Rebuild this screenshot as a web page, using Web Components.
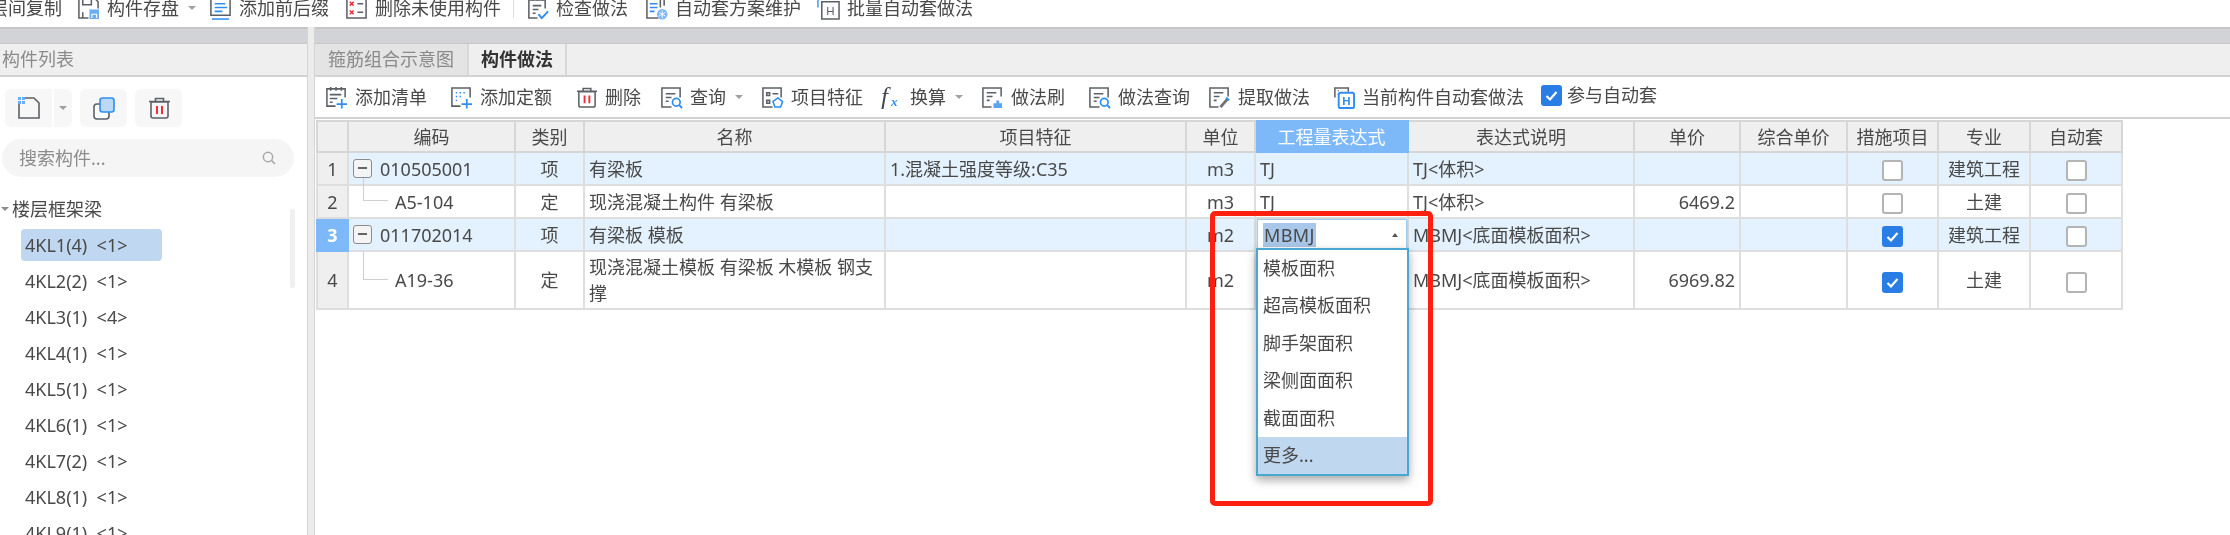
<!DOCTYPE html>
<html lang="zh">
<head>
<meta charset="utf-8">
<title>构件做法</title>
<style>
  html, body { margin: 0; padding: 0; background: #fff; overflow: hidden; }
</style>
</head>
<body>
<gq-app></gq-app>
<script>
const G = '#5c6066', B = '#2f8ef4', R = '#e8303a';
const line = (d, c = G, w = 1.6) => `<path d="${d}" fill="none" stroke="${c}" stroke-width="${w}"/>`;
const svg = (body, size = 24) => `<svg width="${size}" height="${size}" viewBox="0 0 24 24" style="display:block">${body}</svg>`;
const ICONS = {
  save: line('M12 22H2V2h17l3 3v7') + line('M6 2v6h9V2M6 22v-6') + `<rect x="13" y="13" width="10" height="10" fill="#6aaef5"/>` + line('M15.5 22v-4h5v4', '#fff', 1.2),
  prefix: line('M2 2h20v17H2z') + line('M6 7h11M6 11h13M6 15h8', B) + line('M3 23h18', B),
  unused: line('M2 2h20v20H2z') + line('M5 5l4 4M9 5l-4 4M5 14l4 4M9 14l-4 4', R, 1.5) + line('M13 7h6M13 16h6'),
  check: line('M12 22H3V3h17v9') + line('M7 1v3M12 1v3M17 1v3') + line('M7 9h9M7 13h6M7 17h3') + line('M13 18l3.500 4 6.500-7', B, 2),
  scheme: line('M14 22H2V2h14v9') + line('M20 0v9', G) + line('M5 7h8M5 11h8M5 15h5', B) + `<circle cx="18" cy="18" r="5.500" fill="#7db7f5"/>` + line('M18 14v8M14.500 16l7 4M21.500 16l-7 4', '#fff', .9),
  batch: line('M5 5h18v18H5z') + line('M1 0v11M3.500 0v3', B, 1.4) + `<text x="14" y="19" font-size="12" font-family="Liberation Sans" text-anchor="middle" fill="${G}">H</text>`,
  addlist: line('M11 21H2V3h19v9') + line('M6 1v4M11.500 1v4M17 1v4') + line('M5 9h12M5 13h8M5 17h3') + line('M12 19h11M17.500 13.500v10', B, 1.8),
  addquota: line('M11 21H2V2h19v10') + line('M6 7h1.500M10 7h1.500M14 7h1.500M6 11h1.500M10 11h1.500M6 15h1.500', B, 1.5) + line('M12 19h11M17.500 13.500v10', B, 1.8),
  trash: line('M4 6h17v14a2 2 0 0 1-2 2H6a2 2 0 0 1-2-2zM2 5.500h21M8.500 5V2.500h8V5') + line('M10 10v8M15 10v8', R, 2),
  query: line('M12 22H2V2h19v10') + line('M6 8h10M6 12h6M6 16h3') + `<circle cx="17" cy="17" r="4" fill="#fff" stroke="${B}" stroke-width="1.800"/>` + line('M20 20l3 3', B, 2),
  feature: line('M12 22H2V2h19v10') + line('M6 7h3v3H6zM6 15h3v3H6zM12 8h6') + `<path d="M17.500 12.500l5 3.700-2 5.800h-6l-2-5.800z" fill="#fff" stroke="${B}" stroke-width="1.600"/>`,
  brush: line('M11 22H2V2h19v9') + line('M6 7h10M6 11h6M6 15h3') + `<path d="M13 23v-5h3v-3h3v3h3v5z" fill="#5ba4f3"/>`,
  extract: line('M11 22H2V2h19v9') + line('M6 7h10M6 11h6M6 15h3') + line('M13 22l7-8', '#6b7079', 3) + line('M19 12l3 3', B, 2),
  current: line('M3 12V2h14v4') + line('M1 0v0M6 5h1M6 8.500h1', G) + `<rect x="7" y="7" width="16" height="16" rx="2" fill="#fff" stroke="${B}" stroke-width="2"/><text x="15" y="20" font-size="12" font-weight="700" font-family="Liberation Sans" text-anchor="middle" fill="${B}">H</text>`,
  newdoc: line('M2 7v15h20V7l-5-5H6') + `<path d="M1 1h7v7H1z" fill="#6aaef5"/>` + line('M4.500 1v7M1 4.500h7', '#fff', .9),
  copy: `<rect x="2" y="8" width="15" height="15" rx="3" fill="#fff" stroke="${G}" stroke-width="1.600"/><rect x="8" y="2" width="14" height="14" rx="2.500" fill="#bcd8f7" stroke="${B}" stroke-width="1.600"/>`,
  search: `<circle cx="10.500" cy="10.500" r="7" fill="none" stroke="#a8a8a8" stroke-width="2.200"/>` + line('M16 16l5 5', '#a8a8a8', 2.400),
};
const FX = `<svg width="23" height="24" viewBox="0 0 23 24" style="display:block"><text x="1" y="20" font-size="25" font-style="italic" font-family="Liberation Serif" fill="#44484e">f</text><text x="11" y="21" font-size="13" font-weight="700" font-style="italic" font-family="Liberation Serif" fill="${B}">x</text></svg>`;

class GqCheck extends HTMLElement {
  connectedCallback () {
    const on = this.hasAttribute('checked');
    this.attachShadow({ mode: 'open' }).innerHTML = `<style>
        :host { display: inline-block; width: 21px; height: 21px; vertical-align: middle; }
        .box { box-sizing: border-box; width: 21px; height: 21px; border-radius: 3px; background: #fff; border: 2px solid #b4b4b4; }
        .on { background: #2b7de6; border-color: #2b7de6; }
        svg { display: block; margin: 1px; }
      </style>
      <div class="box ${on ? 'on' : ''}">${on ? `<svg width="15" height="15" viewBox="0 0 15 15"><path d="M2.500 8l3.500 3.500 6.500-7.500" fill="none" stroke="#fff" stroke-width="2.200"/></svg>` : ''}</div>`;
  }
}
customElements.define('gq-check', GqCheck);

class GqTool extends HTMLElement {
  connectedCallback () {
    const ml = this.getAttribute('ml') || 0;
    const name = this.getAttribute('icon');
    const ico = name === 'fx' ? FX : (name ? svg(ICONS[name], 23) : '');
    this.attachShadow({ mode: 'open' }).innerHTML = `<style>
        :host { display: flex; align-items: center; gap: 7px; margin-left: ${ml}px; flex: none; white-space: nowrap; }
        .caret { width: 0; height: 0; margin-left: 2px; border-style: solid; border-width: 4px 4px 0; border-color: #a0a0a0 transparent transparent; }
      </style>
      ${ico}<slot></slot>${this.hasAttribute('arrow') ? '<span class="caret"></span>' : ''}`;
  }
}
customElements.define('gq-tool', GqTool);

class GqTopBar extends HTMLElement {
  connectedCallback () {
    this.attachShadow({ mode: 'open' }).innerHTML = `<style>
        :host { display: flex; align-items: center; height: 27px; box-sizing: border-box; padding-bottom: 11px; overflow: hidden; background: #fff; }
        .sep { flex: none; width: 1px; height: 20px; margin-left: 12px; background: #dcdcdc; }
      </style>
      <gq-tool ml="-10">层间复制</gq-tool>
      <gq-tool ml="15" icon="save" arrow>构件存盘</gq-tool>
      <gq-tool ml="13" icon="prefix">添加前后缀</gq-tool>
      <gq-tool ml="16" icon="unused">删除未使用构件</gq-tool>
      <span class="sep"></span>
      <gq-tool ml="12" icon="check">检查做法</gq-tool>
      <gq-tool ml="17" icon="scheme">自动套方案维护</gq-tool>
      <gq-tool ml="16" icon="batch">批量自动套做法</gq-tool>`;
  }
}
customElements.define('gq-topbar', GqTopBar);

class GqSidePanel extends HTMLElement {
  connectedCallback () {
    const items = [['4KL1(4)', '1'], ['4KL2(2)', '1'], ['4KL3(1)', '4'], ['4KL4(1)', '1'], ['4KL5(1)', '1'], ['4KL6(1)', '1'], ['4KL7(2)', '1'], ['4KL8(1)', '1'], ['4KL9(1)', '1']];
    this.attachShadow({ mode: 'open' }).innerHTML = `<style>
        :host { display: block; width: 307px; flex: none; overflow: hidden; position: relative; }
        .band { height: 17px; box-sizing: border-box; background: #d2d3d7; border-top: 2px solid #c6c6c6; border-bottom: 1px solid #c8c8c8; }
        .title { height: 31px; line-height: 30px; background: #efefef; color: #8a8a8a; padding-left: 2px; }
        .rule { height: 2px; background: #d2d2d2; }
        .actions { display: flex; margin: 12px 0 0 5px; height: 38px; }
        .act { background: #f7f7f7; border-radius: 6px; height: 38px; display: flex; align-items: center; justify-content: center; }
        .act.doc { width: 47px; border-radius: 6px 0 0 6px; }
        .act.more { width: 18px; margin-left: 2px; border-radius: 0 6px 6px 0; }
        .act.sq { width: 47px; margin-left: 8px; }
        .act.sq + .act.sq { margin-left: 8px; }
        .caret { width: 0; height: 0; border-style: solid; border-width: 4px 4px 0; border-color: #a0a0a0 transparent transparent; }
        .search { display: flex; align-items: center; justify-content: space-between; margin: 12px 13px 0 2px; height: 38px; border-radius: 19px; background: #f5f5f5; padding: 0 17px; color: #8c8c8c; box-sizing: border-box; }
        .group { display: flex; align-items: center; height: 26px; margin-top: 19px; padding-left: 0; gap: 3px; }
        .group i { width: 0; height: 0; margin-left: 1px; border-style: solid; border-width: 4px 4px 0; border-color: #8a8a8a transparent transparent; }
        ul { list-style: none; margin: 7px 0 0; padding: 0 0 0 21px; }
        li { width: 141px; height: 32px; line-height: 32px; margin-bottom: 4px; padding-left: 4px; box-sizing: border-box; border-radius: 4px; white-space: pre; }
        li.sel { background: #bfd7f0; }
        .bar { position: absolute; left: 290px; top: 182px; width: 5px; height: 79px; border-radius: 3px; background: #f0f0f0; }
      </style>
      <div class="band"></div>
      <div class="title">构件列表</div>
      <div class="rule"></div>
      <div class="actions">
        <span class="act doc">${svg(ICONS.newdoc)}</span>
        <span class="act more"><span class="caret"></span></span>
        <span class="act sq">${svg(ICONS.copy)}</span>
        <span class="act sq">${svg(ICONS.trash)}</span>
      </div>
      <div class="search"><span>搜索构件...</span>${svg(ICONS.search, 16)}</div>
      <div class="group"><i></i><span>楼层框架梁</span></div>
      <ul>${items.map((it, i) => `<li class="${i === 0 ? 'sel' : ''}">${it[0]}  &lt;${it[1]}&gt;</li>`).join('')}</ul>
      <div class="bar"></div>`;
  }
}
customElements.define('gq-sidepanel', GqSidePanel);

class GqGrid extends HTMLElement {
  get htmlTemplate () {
    const cols = [31, 167, 69, 301, 301, 69, 153, 226, 106, 107, 91, 92, 92];
    const heads = ['', '编码', '类别', '名称', '项目特征', '单位', '工程量表达式', '表达式说明', '单价', '综合单价', '措施项目', '专业', '自动套'];
    const rows = [
      { code: '010505001', kind: '项', name: '有梁板', feat: '1.混凝土强度等级:C35', unit: 'm3', expr: 'TJ', desc: 'TJ&lt;体积&gt;', price: '', m: 0, major: '建筑工程', parent: true },
      { code: 'A5-104', kind: '定', name: '现浇混凝土构件 有梁板', feat: '', unit: 'm3', expr: 'TJ', desc: 'TJ&lt;体积&gt;', price: '6469.2', m: 0, major: '土建' },
      { code: '011702014', kind: '项', name: '有梁板 模板', feat: '', unit: 'm2', edit: 'MBMJ', desc: 'MBMJ&lt;底面模板面积&gt;', price: '', m: 1, major: '建筑工程', parent: true, sel: true },
      { code: 'A19-36', kind: '定', name: '现浇混凝土模板 有梁板 木模板 钢支撑', feat: '', unit: 'm2', expr: '', edit2: 'MBMJ', desc: 'MBMJ&lt;底面模板面积&gt;', price: '6969.82', m: 1, major: '土建', tall: true }
    ];
    const body = rows.map((r, i) => `<tr class="${r.parent ? 'blue' : ''} ${r.tall ? 'tall' : ''}">
        <td class="num ${r.sel ? 'cur' : ''}">${i + 1}</td>
        <td class="code">${r.parent
          ? `<span class="tree"><span class="minus"></span>${r.code}</span>`
          : `<span class="link"></span><span class="leaf">${r.code}</span>`}</td>
        <td class="c">${r.kind}</td>
        <td>${r.name}</td>
        <td>${r.feat}</td>
        <td class="c">${r.unit}</td>
        <td class="${r.edit ? 'edit' : ''}">${r.edit ? `<div class="input"><span class="mark">${r.edit}</span><i></i></div>` : (r.expr || r.edit2 || '')}</td>
        <td>${r.desc}</td>
        <td class="r">${r.price}</td>
        <td></td>
        <td class="c"><gq-check ${r.m ? 'checked' : ''}></gq-check></td>
        <td class="c">${r.major}</td>
        <td class="c"><gq-check></gq-check></td>
      </tr>`).join('');
    return `<style>
        :host { display: block; padding-left: 1px; }
        table { border-collapse: collapse; table-layout: fixed; width: 1805px; margin-top: 1px; }
        th, td { border: 2px solid #dedede; padding: 0 4px; font-weight: 400; box-sizing: border-box; height: 33px; line-height: 26px; position: relative; }
        th { background: #efefef; height: 31px; border-color: #d6d6d6; text-align: center; }
        th.hot { background: #7db9f9; color: #fff; border-color: #7db9f9; }
        .blue td { background: #e3f2fe; }
        .tall td { height: 58px; }
        td.num, .blue td.num { background: #efefef; text-align: center; padding: 0; }
        .blue td.cur { background: #7db9f9; color: #fff; font-weight: 700; border-color: #7db9f9; }
        .c { text-align: center; padding: 0; }
        .r { text-align: right; }
        .tree { display: flex; align-items: center; gap: 8px; white-space: nowrap; }
        .minus { display: block; flex: none; box-sizing: border-box; width: 19px; height: 19px; border: 1.500px solid #8c8c8c; border-radius: 3px; background: #f4f4f4; position: relative; }
        .minus:after { content: ""; position: absolute; left: 4px; right: 4px; top: 7px; height: 2px; background: #666; }
        .leaf { padding-left: 42px; }
        .link { position: absolute; left: 14px; top: -8px; bottom: 16px; width: 24px; border-left: 1px solid #cfcfcf; border-bottom: 1px solid #cfcfcf; }
        .tall .link { top: -1px; bottom: 28px; }
        .edit { padding: 0; background: #fff; }
        .blue .edit { background: #e3f2fe; }
        .input { box-sizing: border-box; height: 31px; margin: 0 0 0 1px; background: #fff; border: 1px solid #9fcdeb; display: flex; align-items: center; padding-left: 5px; box-shadow: 0 1px 4px rgba(0,0,0,.2); position: relative; }
        .mark { background: #a9c7e8; line-height: 24px; padding: 0 1px; letter-spacing: .4px; }
        .input i { position: absolute; right: 8px; top: 13px; width: 0; height: 0; border-style: solid; border-width: 0 3.500px 4px; border-color: transparent transparent #555; }
      </style>
      <table>
        <colgroup>${cols.map(w => `<col style="width:${w}px">`).join('')}</colgroup>
        <thead><tr>${heads.map((h, i) => `<th class="${i === 6 ? 'hot' : ''}">${h}</th>`).join('')}</tr></thead>
        <tbody>${body}</tbody>
      </table>`;
  }
  connectedCallback () {
    this.attachShadow({ mode: 'open' }).innerHTML = this.htmlTemplate;
  }
}
customElements.define('gq-grid', GqGrid);

class GqWorkPanel extends HTMLElement {
  connectedCallback () {
    this.attachShadow({ mode: 'open' }).innerHTML = `<style>
        :host { display: block; flex: 1; min-width: 0; overflow: hidden; }
        .band { height: 17px; box-sizing: border-box; background: #d2d3d7; border-top: 2px solid #c6c6c6; border-bottom: 1px solid #c8c8c8; }
        .tabs { display: flex; height: 31px; background: #efefef; }
        .tab { box-sizing: border-box; line-height: 30px; padding: 0 13px; border-right: 2px solid #d8d8d8; white-space: nowrap; }
        .tab.off { background: #e4e4e4; color: #8a8a8a; }
        .tab.on { font-weight: 700; color: #333; padding: 0 12px; }
        .rule { height: 2px; background: #d2d2d2; }
        .bar { display: flex; align-items: center; height: 40px; padding-left: 10px; }
        .auto { display: flex; align-items: center; gap: 5px; margin-left: 17px; margin-top: -4px; white-space: nowrap; }
      </style>
      <div class="band"></div>
      <div class="tabs"><div class="tab off">箍筋组合示意图</div><div class="tab on">构件做法</div></div>
      <div class="rule"></div>
      <div class="bar">
        <gq-tool icon="addlist">添加清单</gq-tool>
        <gq-tool ml="23" icon="addquota">添加定额</gq-tool>
        <gq-tool ml="23" icon="trash">删除</gq-tool>
        <gq-tool ml="19" icon="query" arrow>查询</gq-tool>
        <gq-tool ml="18" icon="feature">项目特征</gq-tool>
        <gq-tool ml="17" icon="fx" arrow>换算</gq-tool>
        <gq-tool ml="18" icon="brush">做法刷</gq-tool>
        <gq-tool ml="23" icon="query">做法查询</gq-tool>
        <gq-tool ml="18" icon="extract">提取做法</gq-tool>
        <gq-tool ml="22" icon="current">当前构件自动套做法</gq-tool>
        <div class="auto"><gq-check checked></gq-check><span>参与自动套</span></div>
      </div>
      <div class="rule"></div>
      <gq-grid></gq-grid>`;
  }
}
customElements.define('gq-workpanel', GqWorkPanel);

class GqDropdown extends HTMLElement {
  connectedCallback () {
    const opts = (this.getAttribute('options') || '').split(',');
    this.attachShadow({ mode: 'open' }).innerHTML = `<style>
        :host { display: block; position: absolute; left: 1256px; top: 248px; width: 153px; box-sizing: border-box; background: #fff; border: 2px solid #4aa8d0; box-shadow: 0 4px 9px rgba(0,0,0,.35); }
        div { height: 37.400px; line-height: 37px; padding-left: 5px; white-space: nowrap; }
        div:last-child { background: #bfd7ef; }
      </style>
      ${opts.map(o => `<div>${o}</div>`).join('')}`;
  }
}
customElements.define('gq-dropdown', GqDropdown);

class GqApp extends HTMLElement {
  connectedCallback () {
    this.attachShadow({ mode: 'open' }).innerHTML = `<style>
        :host { display: block; position: relative; width: 2230px; height: 535px; overflow: hidden; background: #fff;
          font: 18px/26px "Noto Sans", "Noto Sans CJK SC", sans-serif; color: #494949; filter: blur(.4px); }
        .main { display: flex; height: 508px; }
        .split { flex: none; width: 8px; box-sizing: border-box; background: #ececec; border-left: 1px solid #d4d4d4; border-right: 1px solid #d4d4d4; }
        .mark { position: absolute; left: 1210px; top: 211px; width: 223px; height: 295px; box-sizing: border-box; border: 5px solid #ff2010; border-radius: 5px; }
      </style>
      <gq-topbar></gq-topbar>
      <div class="main">
        <gq-sidepanel></gq-sidepanel>
        <div class="split"></div>
        <gq-workpanel></gq-workpanel>
      </div>
      <gq-dropdown options="模板面积,超高模板面积,脚手架面积,梁侧面面积,截面面积,更多..."></gq-dropdown>
      <div class="mark"></div>`;
  }
}
customElements.define('gq-app', GqApp);
</script>
</body>
</html>
